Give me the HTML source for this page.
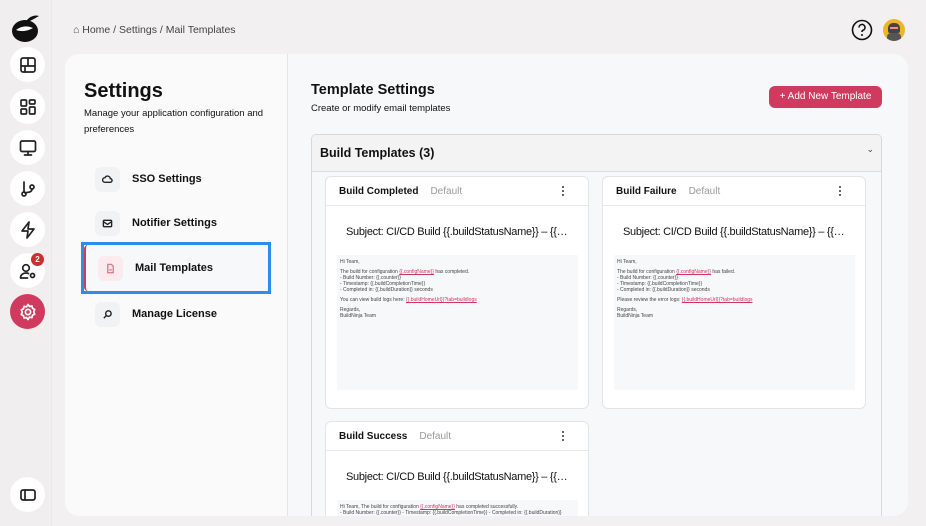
<!DOCTYPE html>
<html><head><meta charset="utf-8"><style>
*{box-sizing:border-box;margin:0;padding:0}
body{width:926px;height:526px;overflow:hidden;background:#f2f0f1;font-family:"Liberation Sans",sans-serif;color:#111;position:relative}
.rail{position:absolute;left:0;top:0;width:52px;height:526px;background:#f0eeef;border-right:1px solid #ebe9ea}
.ic{position:absolute;left:10px;width:35px;height:35px;border-radius:50%;background:#fff;display:flex;align-items:center;justify-content:center}
.ic svg{width:20px;height:20px;fill:none;stroke:#222;stroke-width:1.7;stroke-linecap:round;stroke-linejoin:round}
.abs{position:absolute}
.panel{position:absolute;left:65px;top:54px;width:843px;height:462px;border-radius:14px;overflow:hidden;background:#f7f8fa}
.side{position:absolute;left:0;top:0;width:223px;height:462px;background:#fafafb;border-right:1px solid #e5e5e7}
.item{position:absolute;left:30px;height:26px;display:flex;align-items:center;font-size:11px;font-weight:bold;color:#111}
.item .b{width:25px;height:25px;border-radius:6px;background:#f1f2f4;margin-right:12px;display:flex;align-items:center;justify-content:center}
.item svg{width:11px;height:11px;fill:none;stroke:#222;stroke-width:1.5}
.card{position:absolute;width:264px;background:#fff;border:1px solid #e4e4e6;border-radius:6px;overflow:hidden}
.ch{height:29px;border-bottom:1px solid #e8e8ea;display:flex;align-items:center;padding-left:13px;font-size:10px;font-weight:bold}
.ch span{color:#9a9a9a;font-weight:normal;margin-left:12px}
.ch i{position:absolute;right:24px;top:9px;width:2px;height:10px;border-left:2px dotted #666}
.subj{font-size:11px;letter-spacing:-0.3px;padding:20px 0 0 0;margin:0 20px;height:49px;white-space:nowrap;overflow:hidden;text-overflow:ellipsis}
.body{margin:0 10px 0 11px;background:#f7f8fa;height:135px;padding:4px 3px;font-size:5px;line-height:6px;color:#444}
.body p{margin-bottom:4px}
.l{color:#d0365b;text-decoration:underline}
</style></head><body>
<div class="rail">
 <svg class="abs" style="left:10px;top:13px" width="32" height="30" viewBox="0 0 32 30"><ellipse cx="15" cy="18" rx="13" ry="11" fill="#111"/><path d="M16 8 Q22 1 29 3 Q24 6 18 9Z" fill="#111"/><path d="M6 17 Q14 11 23 15 Q14 20 6 17Z" fill="#fff"/></svg>
 <div class="ic" style="top:47px"><svg viewBox="0 0 20 20"><rect x="3" y="3" width="14" height="14" rx="2"/><path d="M3 11h14M10 3v8M7 11v6"/></svg></div>
 <div class="ic" style="top:89px"><svg viewBox="0 0 20 20"><rect x="3" y="3" width="5.5" height="6" rx="1"/><rect x="11.5" y="3" width="5.5" height="4" rx="1"/><rect x="3" y="12" width="5.5" height="5" rx="1"/><rect x="11.5" y="10" width="5.5" height="7" rx="1"/></svg></div>
 <div class="ic" style="top:130px"><svg viewBox="0 0 20 20"><rect x="2.5" y="3" width="15" height="10.5" rx="1.5"/><path d="M10 13.5v3M6.5 17h7"/></svg></div>
 <div class="ic" style="top:171px"><svg viewBox="0 0 20 20"><circle cx="6" cy="15" r="2"/><circle cx="14" cy="8" r="2"/><path d="M6 3v10M14 10c0 4-5 3-7 4"/></svg></div>
 <div class="ic" style="top:212px"><svg viewBox="0 0 20 20"><path d="M11 2L4 11h6l-1 7 7-9h-6z"/></svg></div>
 <div class="ic" style="top:253px"><svg viewBox="0 0 20 20"><circle cx="8" cy="7" r="3.3"/><path d="M2.5 17c0-3.5 3-5 5.5-5 1.3 0 2 .2 2.5.5M2.5 17h7"/><circle cx="14.5" cy="14.5" r="2"/></svg></div>
 <div class="abs" style="left:31px;top:253px;width:13px;height:13px;border-radius:50%;background:#c8312f;color:#fff;font-size:8px;font-weight:bold;text-align:center;line-height:13px">2</div>
 <div class="ic" style="top:294px;background:#d03a5e"><svg viewBox="0 0 20 20" style="stroke:#fff"><circle cx="10" cy="10" r="2.6"/><path d="M10 2.5l1.5 2 2.4-.6.6 2.4 2.2 1.2-1 2.3 1 2.3-2.2 1.2-.6 2.4-2.4-.6L10 17.5l-1.5-2-2.4.6-.6-2.4-2.2-1.2 1-2.3-1-2.3 2.2-1.2.6-2.4 2.4.6z"/></svg></div>
 <div class="ic" style="top:477px"><svg viewBox="0 0 20 20"><rect x="3" y="5" width="14" height="10" rx="2"/><path d="M7 5v10"/></svg></div>
</div>
<div class="abs" style="left:73px;top:24px;font-size:10.5px;color:#444">⌂ Home / Settings / Mail Templates</div>
<svg class="abs" style="left:851px;top:19px" width="22" height="22" viewBox="0 0 22 22"><circle cx="11" cy="11" r="9.5" fill="none" stroke="#111" stroke-width="1.6"/><path d="M8 8.5a3 3 0 1 1 4 2.8c-.8.3-1 .9-1 1.7" fill="none" stroke="#111" stroke-width="1.6"/><circle cx="11" cy="16" r="1" fill="#111"/></svg>
<div class="abs" style="left:883px;top:19px;width:22px;height:22px;border-radius:50%;background:#f0b429;overflow:hidden"><div style="position:absolute;left:5px;top:4px;width:12px;height:10px;background:#444;border-radius:5px 5px 2px 2px"></div><div style="position:absolute;left:7px;top:8px;width:8px;height:2px;background:#f88"></div><div style="position:absolute;left:4px;top:14px;width:14px;height:9px;background:#555;border-radius:4px 4px 0 0"></div></div>
<div class="panel">
 <div class="side">
  <div class="abs" style="left:19px;top:26px;font-size:20px;font-weight:bold">Settings</div>
  <div class="abs" style="left:19px;top:52px;width:195px;font-size:9.5px;line-height:16px">Manage your application configuration and preferences</div>
  <div class="item" style="top:112px"><div class="b"><svg viewBox="0 0 12 12"><path d="M3 9a2.5 2.5 0 0 1 .3-5 3 3 0 0 1 5.7 1 2 2 0 0 1 0 4z"/></svg></div>SSO Settings</div>
  <div class="item" style="top:156px"><div class="b"><svg viewBox="0 0 12 12"><rect x="1.5" y="2.5" width="9" height="7" rx="1"/><path d="M1.5 4l4.5 3 4.5-3"/></svg></div>Notifier Settings</div>
  <div class="abs" style="left:16px;top:188px;width:190px;height:52px;border:3px solid #2e8de8"><div style="position:absolute;left:0;top:0;right:0;bottom:0;background:#f7f8fa;border-left:2px solid #d03a5e;border-radius:4px"></div></div>
  <div class="item" style="top:201px;left:33px"><div class="b" style="background:#fbeaee"><svg viewBox="0 0 12 12" style="stroke:#e27a93"><path d="M3 1.5h4l2 2v7H3z M4.5 7.5h3"/></svg></div>Mail Templates</div>
  <div class="item" style="top:247px"><div class="b"><svg viewBox="0 0 12 12"><circle cx="7" cy="5" r="3"/><path d="M5 7l-3 3"/></svg></div>Manage License</div>
 </div>
 <div class="abs" style="left:246px;top:28px;font-size:14.5px;font-weight:bold">Template Settings</div>
 <div class="abs" style="left:246px;top:49px;font-size:9.5px">Create or modify email templates</div>
 <div class="abs" style="left:704px;top:32px;width:113px;height:22px;border-radius:6px;background:#d03a5e;color:#fff;font-size:10px;line-height:22px;text-align:center">+ Add New Template</div>
 <div class="abs" style="left:246px;top:80px;width:571px;height:400px;border:1px solid #d8d8da;border-radius:5px;background:#f7f8fa;overflow:hidden">
  <div style="height:37px;background:#f3f3f4;border-bottom:1px solid #dcdcde;font-size:12.5px;font-weight:bold;padding:11px 0 0 8px">Build Templates (3)<span style="position:absolute;right:7px;top:9px;font-weight:normal;font-size:9px;color:#444">⌄</span></div>
 </div>
 <div class="card" style="left:260px;top:122px;height:233px"><div class="ch">Build Completed<span>Default</span><i></i></div><div class="subj">Subject: CI/CD Build {{.buildStatusName}} – {{.configName}}</div>
 <div class="body"><p>Hi Team,</p><p>The build for configuration <span class="l">{{.configName}}</span> has completed.<br>- Build Number: {{.counter}}<br>- Timestamp: {{.buildCompletionTime}}<br>- Completed in: {{.buildDuration}} seconds</p><p>You can view build logs here: <span class="l">{{.buildHomeUrl}}?tab=buildlogs</span></p><p>Regards,<br>BuildNinja Team</p></div></div>
 <div class="card" style="left:537px;top:122px;height:233px"><div class="ch">Build Failure<span>Default</span><i></i></div><div class="subj">Subject: CI/CD Build {{.buildStatusName}} – {{.configName}}</div>
 <div class="body"><p>Hi Team,</p><p>The build for configuration <span class="l">{{.configName}}</span> has failed.<br>- Build Number: {{.counter}}<br>- Timestamp: {{.buildCompletionTime}}<br>- Completed in: {{.buildDuration}} seconds</p><p>Please review the error logs: <span class="l">{{.buildHomeUrl}}?tab=buildlogs</span></p><p>Regards,<br>BuildNinja Team</p></div></div>
 <div class="card" style="left:260px;top:367px;height:120px"><div class="ch">Build Success<span>Default</span><i></i></div><div class="subj">Subject: CI/CD Build {{.buildStatusName}} – {{.configName}}</div>
 <div class="body">Hi Team, The build for configuration <span class="l">{{.configName}}</span> has completed successfully.<br>- Build Number: {{.counter}} - Timestamp: {{.buildCompletionTime}} - Completed in: {{.buildDuration}} seconds You can view build logs here: <span class="l">{{.buildHomeUrl}}?tab=buildlogs</span> Regards, BuildNinja Team</div></div>
</div>
</body></html>
